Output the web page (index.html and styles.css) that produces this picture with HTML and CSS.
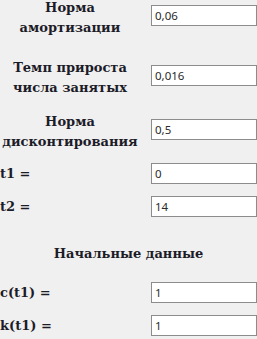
FILE: index.html
```html
<!DOCTYPE html>
<html>
  <head>
    <title>Параметры модели</title>
    <link rel="stylesheet" href="styles.css">
  </head>
  <body>
    <main class="params">
      <div class="row row-amort">
        <label class="name two" for="amort">Норма<br />амортизации</label>
        <input class="field" id="amort" value="0,06" />
      </div>
      <div class="row row-growth">
        <label class="name two" for="growth">Темп прироста<br />числа занятых</label>
        <input class="field" id="growth" value="0,016" />
      </div>
      <div class="row row-disc">
        <label class="name two" for="disc">Норма<br />дисконтирования</label>
        <input class="field" id="disc" value="0,5" />
      </div>
      <div class="row row-t1">
        <label class="name" for="t1">t1 =</label>
        <input class="field" id="t1" value="0" />
      </div>
      <div class="row row-t2">
        <label class="name" for="t2">t2 =</label>
        <input class="field" id="t2" value="14" />
      </div>

      <h2 class="heading">Начальные данные</h2>

      <div class="row row-c">
        <label class="name" for="c1">c(t1) =</label>
        <input class="field" id="c1" value="1" />
      </div>
      <div class="row row-k">
        <label class="name" for="k1">k(t1) =</label>
        <input class="field" id="k1" value="1" />
      </div>
    </main>
  </body>
</html>
```

FILE: styles.css
```css
html,
body {
  margin: 0;
  background: #f0f0f0;
}
body {
  width: 257px;
  height: 339px;
  overflow: hidden;
  font-family: "DejaVu Serif", serif;
  font-weight: bold;
  font-size: 13px;
  color: #1c1c28;
}
.params {
  display: flex;
  flex-direction: column;
}
.row {
  display: flex;
  align-items: center;
  height: 21px;
}
.name {
  flex: none;
  width: 140px;
  margin-right: 11px;
  line-height: 20px;
  white-space: nowrap;
}
.name.two {
  text-align: center;
  padding-top: 4px;
}
.field {
  flex: none;
  box-sizing: border-box;
  width: 106px;
  height: 21px;
  margin: 0;
  padding: 0 3px;
  border: 1px solid #8c8c8c;
  background: #fff;
  font-family: "Noto Sans", sans-serif;
  font-weight: normal;
  font-size: 11.5px;
  color: #2a2a2a;
  outline: none;
}
.row-amort {
  margin-top: 5px;
}
.row-growth {
  margin-top: 39px;
}
.row-disc {
  margin-top: 33px;
}
.row-t1 {
  margin-top: 23px;
}
.row-t2,
.row-k {
  margin-top: 12px;
}
.heading {
  margin: 27px 0 0;
  font-size: 13px;
  line-height: 20px;
  text-align: center;
}
.row-c {
  margin-top: 18px;
}
```
